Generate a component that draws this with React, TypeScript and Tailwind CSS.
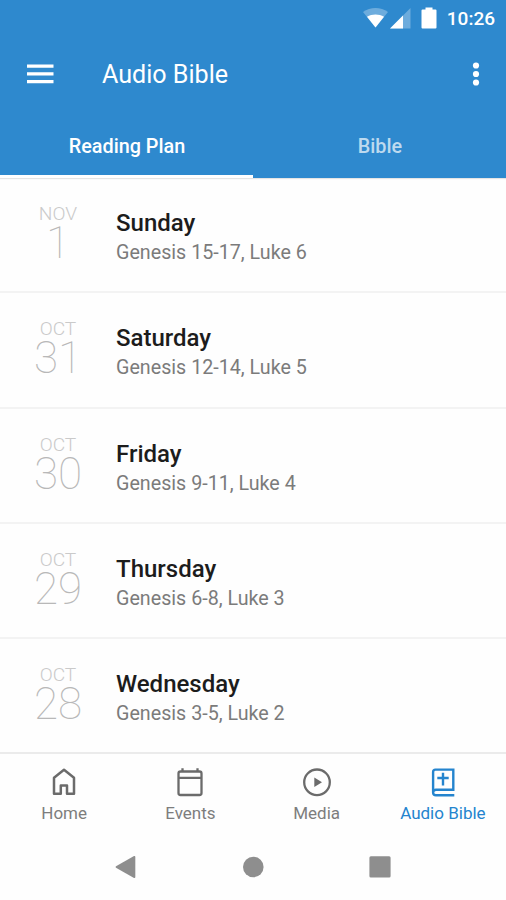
import React from 'react';

interface Reading {
  month: string;
  date: number;
  day: string;
  passage: string;
}

const readings: Reading[] = [
  { month: 'NOV', date: 1, day: 'Sunday', passage: 'Genesis 15-17, Luke 6' },
  { month: 'OCT', date: 31, day: 'Saturday', passage: 'Genesis 12-14, Luke 5' },
  { month: 'OCT', date: 30, day: 'Friday', passage: 'Genesis 9-11, Luke 4' },
  { month: 'OCT', date: 29, day: 'Thursday', passage: 'Genesis 6-8, Luke 3' },
  { month: 'OCT', date: 28, day: 'Wednesday', passage: 'Genesis 3-5, Luke 2' },
];

const StatusBar: React.FC = () => (
  <div className="h-[38px] flex items-start justify-end pr-[11px] pt-[7px]">
    <svg width="75" height="22" viewBox="0 0 75 22" fill="#fff">
      <path d="M0 5C7.3-.5 17.7-.5 25 5L12.5 20.5Z" opacity=".3" />
      <path d="M4 9.8C9 6.8 16 6.8 21 9.8L12.5 20.5Z" />
      <path d="M47.500 1V21.500H27Z" opacity=".3" />
      <path d="M40 8.500V21.500H27Z" />
      <path d="M59.5 2.500H62.500V.5H69.500V2.500H72.500Q73.500 2.500 73.500 3.500V20.500Q73.500 21.500 72.500 21.500H59.500Q58.500 21.500 58.500 20.500V3.500Q58.500 2.500 59.500 2.500Z" />
    </svg>
    <span className="ml-[9px] text-[19px] leading-[23px] font-medium">10:26</span>
  </div>
);

const Header: React.FC = () => {
  const [tab, setTab] = React.useState(0);

  return (
    <header className="h-[178px] shrink-0 flex flex-col bg-[#2e89ce] text-white shadow-[0_1px_1px_rgba(0,0,0,0.1)]">
      <StatusBar />
      <div className="h-[72px] flex items-center pl-[26.5px] pr-[26px]">
        <button aria-label="Menu">
          <svg width="27" height="20" viewBox="0 0 27 20" fill="#fff">
            <path d="M0 .5H26.500V3.700H0ZM0 8.200H26.500V11.400H0ZM0 16H26.500V19.200H0Z" />
          </svg>
        </button>
        <h1 className="ml-[48.5px] mt-[2px] text-[25.1px] leading-[30px]">Audio Bible</h1>
        <button aria-label="More" className="ml-auto">
          <svg width="8" height="24" viewBox="0 0 8 24" fill="#fff">
            <circle cx="4" cy="3.5" r="3.1" />
            <circle cx="4" cy="12" r="3.1" />
            <circle cx="4" cy="20.5" r="3.1" />
          </svg>
        </button>
      </div>
      <div className="flex flex-1 text-[19.8px] font-medium">
        {['Reading Plan', 'Bible'].map((label, i) => (
          <button
            key={label}
            onClick={() => setTab(i)}
            className={`flex-1 basis-0 pt-2 pl-px border-b-[3px] ${tab === i ? 'border-white' : 'border-transparent text-white/70'}`}
          >
            {label}
          </button>
        ))}
      </div>
    </header>
  );
};

const ReadingRow: React.FC<{ item: Reading }> = ({ item }) => (
  <li className="h-[115.3px] flex border-b-2 border-[#f3f3f3] last:border-[#ebebeb]">
    <div className="w-[116px] pt-[25px] flex flex-col items-center text-[#cacaca]">
      <span className="text-[19.2px] leading-[22px] font-light">{item.month}</span>
      <span className="text-[44px] leading-9 font-thin text-[#b8b8b8]">{item.date}</span>
    </div>
    <div className="pt-[30px]">
      <h2 className="text-[24px] leading-[30px] font-medium text-[#1c1c1c]">{item.day}</h2>
      <p className="text-[19.7px] leading-[30px] text-[#7b7b7b]">{item.passage}</p>
    </div>
  </li>
);

const HomeIcon = () => (
  <svg width="30" height="30" viewBox="0 0 30 30" fill="none" stroke="currentColor" strokeWidth="2.5">
    <path d="M5 10.7 15 2.8 25 10.7V26.8H18V18.5H11.8V26.8H5Z" strokeLinejoin="round" />
  </svg>
);

const EventsIcon = () => (
  <svg width="30" height="30" viewBox="0 0 30 30" fill="none" stroke="currentColor" strokeWidth="2.3">
    <rect x="3.5" y="4.5" width="23" height="23.5" rx="2" />
    <path d="M3.5 10.8H26.5M7.5 1.3V5M22.5 1.3V5" />
  </svg>
);

const MediaIcon = () => (
  <svg width="30" height="30" viewBox="0 0 30 30" fill="none" stroke="currentColor" strokeWidth="2.3">
    <circle cx="15" cy="15.3" r="12.8" />
    <path d="M12.3 10.5V20L20 15.2Z" fill="currentColor" stroke="none" />
  </svg>
);

const BibleIcon = () => (
  <svg width="30" height="30" viewBox="0 0 30 30" fill="none" stroke="currentColor" strokeWidth="2.4">
    <path d="M26.3 28.3H8Q5.1 28.3 5.1 25.5V5Q5.1 2.6 7.5 2.6H25.3V22.8H8Q5.1 22.8 5.1 25.5" />
    <path d="M15 5.7V18.5M9.3 11H20.7" />
  </svg>
);

const navItems = [
  { label: 'Home', Icon: HomeIcon },
  { label: 'Events', Icon: EventsIcon },
  { label: 'Media', Icon: MediaIcon },
  { label: 'Audio Bible', Icon: BibleIcon, active: true },
];

const BottomNav: React.FC = () => (
  <nav className="flex h-[79px] pt-[12.5px] pl-px">
    {navItems.map(({ label, Icon, active }) => (
      <button
        key={label}
        className={`flex-1 basis-0 flex flex-col items-center ${active ? 'text-[#2484ce]' : 'text-[#6b6b6b]'}`}
      >
        <Icon />
        <span className={`mt-[5.5px] text-[17px] leading-5 whitespace-nowrap ${active ? '' : 'text-[#7d7d7d]'}`}>
          {label}
        </span>
      </button>
    ))}
  </nav>
);

const SystemNav: React.FC = () => (
  <div className="flex flex-1 justify-center gap-[105px] pt-[21px] text-[#8e8e8e]">
    <svg width="22" height="24" viewBox="0 0 22 24" fill="currentColor">
      <path d="M1 11.3 19 1.1Q20.3.5 20.3 2V22Q20.3 23.5 19 22.9L1 12.7Q0 12 1 11.3Z" />
    </svg>
    <svg width="22" height="24" viewBox="0 0 22 24" fill="currentColor">
      <circle cx="11.3" cy="12" r="10.300" />
    </svg>
    <svg width="22" height="24" viewBox="0 0 22 24" fill="currentColor">
      <rect x=".4" y="1.3" width="21.2" height="21.2" rx="1.5" />
    </svg>
  </div>
);

const App: React.FC = () => (
  <div className="w-[506px] h-[900px] flex flex-col overflow-hidden bg-[#fefefe] font-[Roboto,sans-serif]">
    <Header />
    <ul className="h-[576.5px] shrink-0">
      {readings.map(item => (
        <ReadingRow key={item.day} item={item} />
      ))}
    </ul>
    <BottomNav />
    <SystemNav />
  </div>
);

export default App;
